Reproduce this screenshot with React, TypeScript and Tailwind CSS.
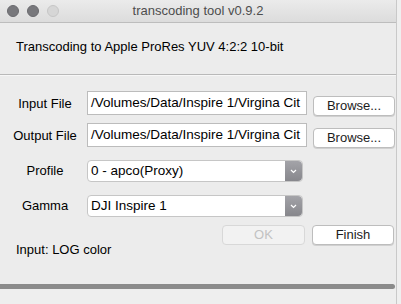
import React from "react";

const font = "font-['Liberation_Sans',Arial,sans-serif]";

function Field({ value }: { value: string }) {
  return (
    <div className="ml-[2px] h-[24px] w-[220px] border border-[#bcbcbc] bg-white pl-[3px] text-[13.5px] leading-[22px] text-black overflow-hidden whitespace-nowrap">
      {value}
    </div>
  );
}

function Browse() {
  return (
    <button className="ml-[6px] h-[20px] w-[82px] rounded-[4px] border border-[#bdbdbd] bg-white text-[13px] leading-[18px] text-[#1c1c1c] shadow-[0_1px_0_#d0d0d0]">
      Browse...
    </button>
  );
}

function Select({ value }: { value: string }) {
  return (
    <div className="ml-[2px] flex h-[22px] w-[216px] rounded-[4px] border border-[#c6c6c6] bg-white">
      <div className="flex-1 pl-[3px] text-[13.5px] leading-[20px] text-black">{value}</div>
      <div className="flex w-[17px] items-center justify-center rounded-r-[4px] bg-gradient-to-b from-[#a3a3a8] to-[#87878c]">
        <svg width="7" height="5" viewBox="0 0 7 5">
          <path d="M1 1l2.5 2.5L6 1" stroke="white" strokeWidth="1.2" fill="none" />
        </svg>
      </div>
    </div>
  );
}

export default function App() {
  return (
    <div className={`w-[401px] h-[304px] bg-[#efefef] flex overflow-hidden ${font}`}>
      <div className="w-[397px] border-r border-[#c9c9c9] flex flex-col bg-[#ececec]">
        {/* title bar */}
        <div className="relative h-[23px] shrink-0 border-b border-[#bdbdbd] bg-gradient-to-b from-[#ebebeb] to-[#dcdcdc] flex items-center">
          <div className="flex items-center gap-[8px] pl-[7px]">
            <span className="h-[12px] w-[12px] rounded-full bg-[#78787c] border border-[#6a6a6e]" />
            <span className="h-[12px] w-[12px] rounded-full bg-[#78787c] border border-[#6a6a6e]" />
            <span className="h-[12px] w-[12px] rounded-full bg-[#d6d6d6] border border-[#c6c6c6]" />
          </div>
          <div className="absolute inset-0 flex items-center justify-center text-[13px] text-[#4d4d4d]">
            transcoding tool v0.9.2
          </div>
        </div>

        <div className="h-[51px] shrink-0 pt-[16px] pl-[16px] text-[13px] leading-[15px] text-black">
          Transcoding to Apple ProRes YUV 4:2:2 10-bit
        </div>
        <div className="h-px bg-[#b9b9b9]" />
        <div className="h-px bg-[#f7f7f7]" />

        <div className="flex flex-col pt-[15px] text-[13px] text-black">
          <div className="flex items-start">
            <div className="ml-[5px] w-[80px] text-center leading-[26px]">Input File</div>
            <Field value="/Volumes/Data/Inspire 1/Virgina Cit" />
            <div className="mt-[5px]"><Browse /></div>
          </div>
          <div className="mt-[6px] flex items-start">
            <div className="ml-[5px] w-[80px] text-center leading-[26px]">Output File</div>
            <Field value="/Volumes/Data/Inspire 1/Virgina Cit" />
            <div className="mt-[5px]"><Browse /></div>
          </div>
          <div className="mt-[11px] flex items-start">
            <div className="ml-[5px] w-[80px] text-center leading-[22px]">Profile</div>
            <Select value="0 - apco(Proxy)" />
          </div>
          <div className="mt-[13px] flex items-start">
            <div className="ml-[5px] w-[80px] text-center leading-[22px]">Gamma</div>
            <Select value="DJI Inspire 1" />
          </div>
          <div className="mt-[8px] flex items-start">
            <div className="mt-[17px] pl-[16px] leading-[15px]">Input: LOG color</div>
            <div className="ml-auto mr-[2px] flex gap-[7px]">
              <button className="h-[20px] w-[83px] rounded-[4px] border border-[#d8d8d8] bg-[#f2f2f2] text-[13px] leading-[18px] text-[#c2c2c2]">
                OK
              </button>
              <button className="h-[20px] w-[82px] rounded-[4px] border border-[#bdbdbd] bg-white text-[13px] leading-[18px] text-[#1c1c1c] shadow-[0_1px_0_#d0d0d0]">
                Finish
              </button>
            </div>
          </div>
        </div>

        <div className="mt-auto mr-[1px] h-[5px] rounded-r-[3px] bg-[#8b8b8b]" />
        <div className="h-[15px] bg-[#eeeeee]" />
      </div>
    </div>
  );
}
